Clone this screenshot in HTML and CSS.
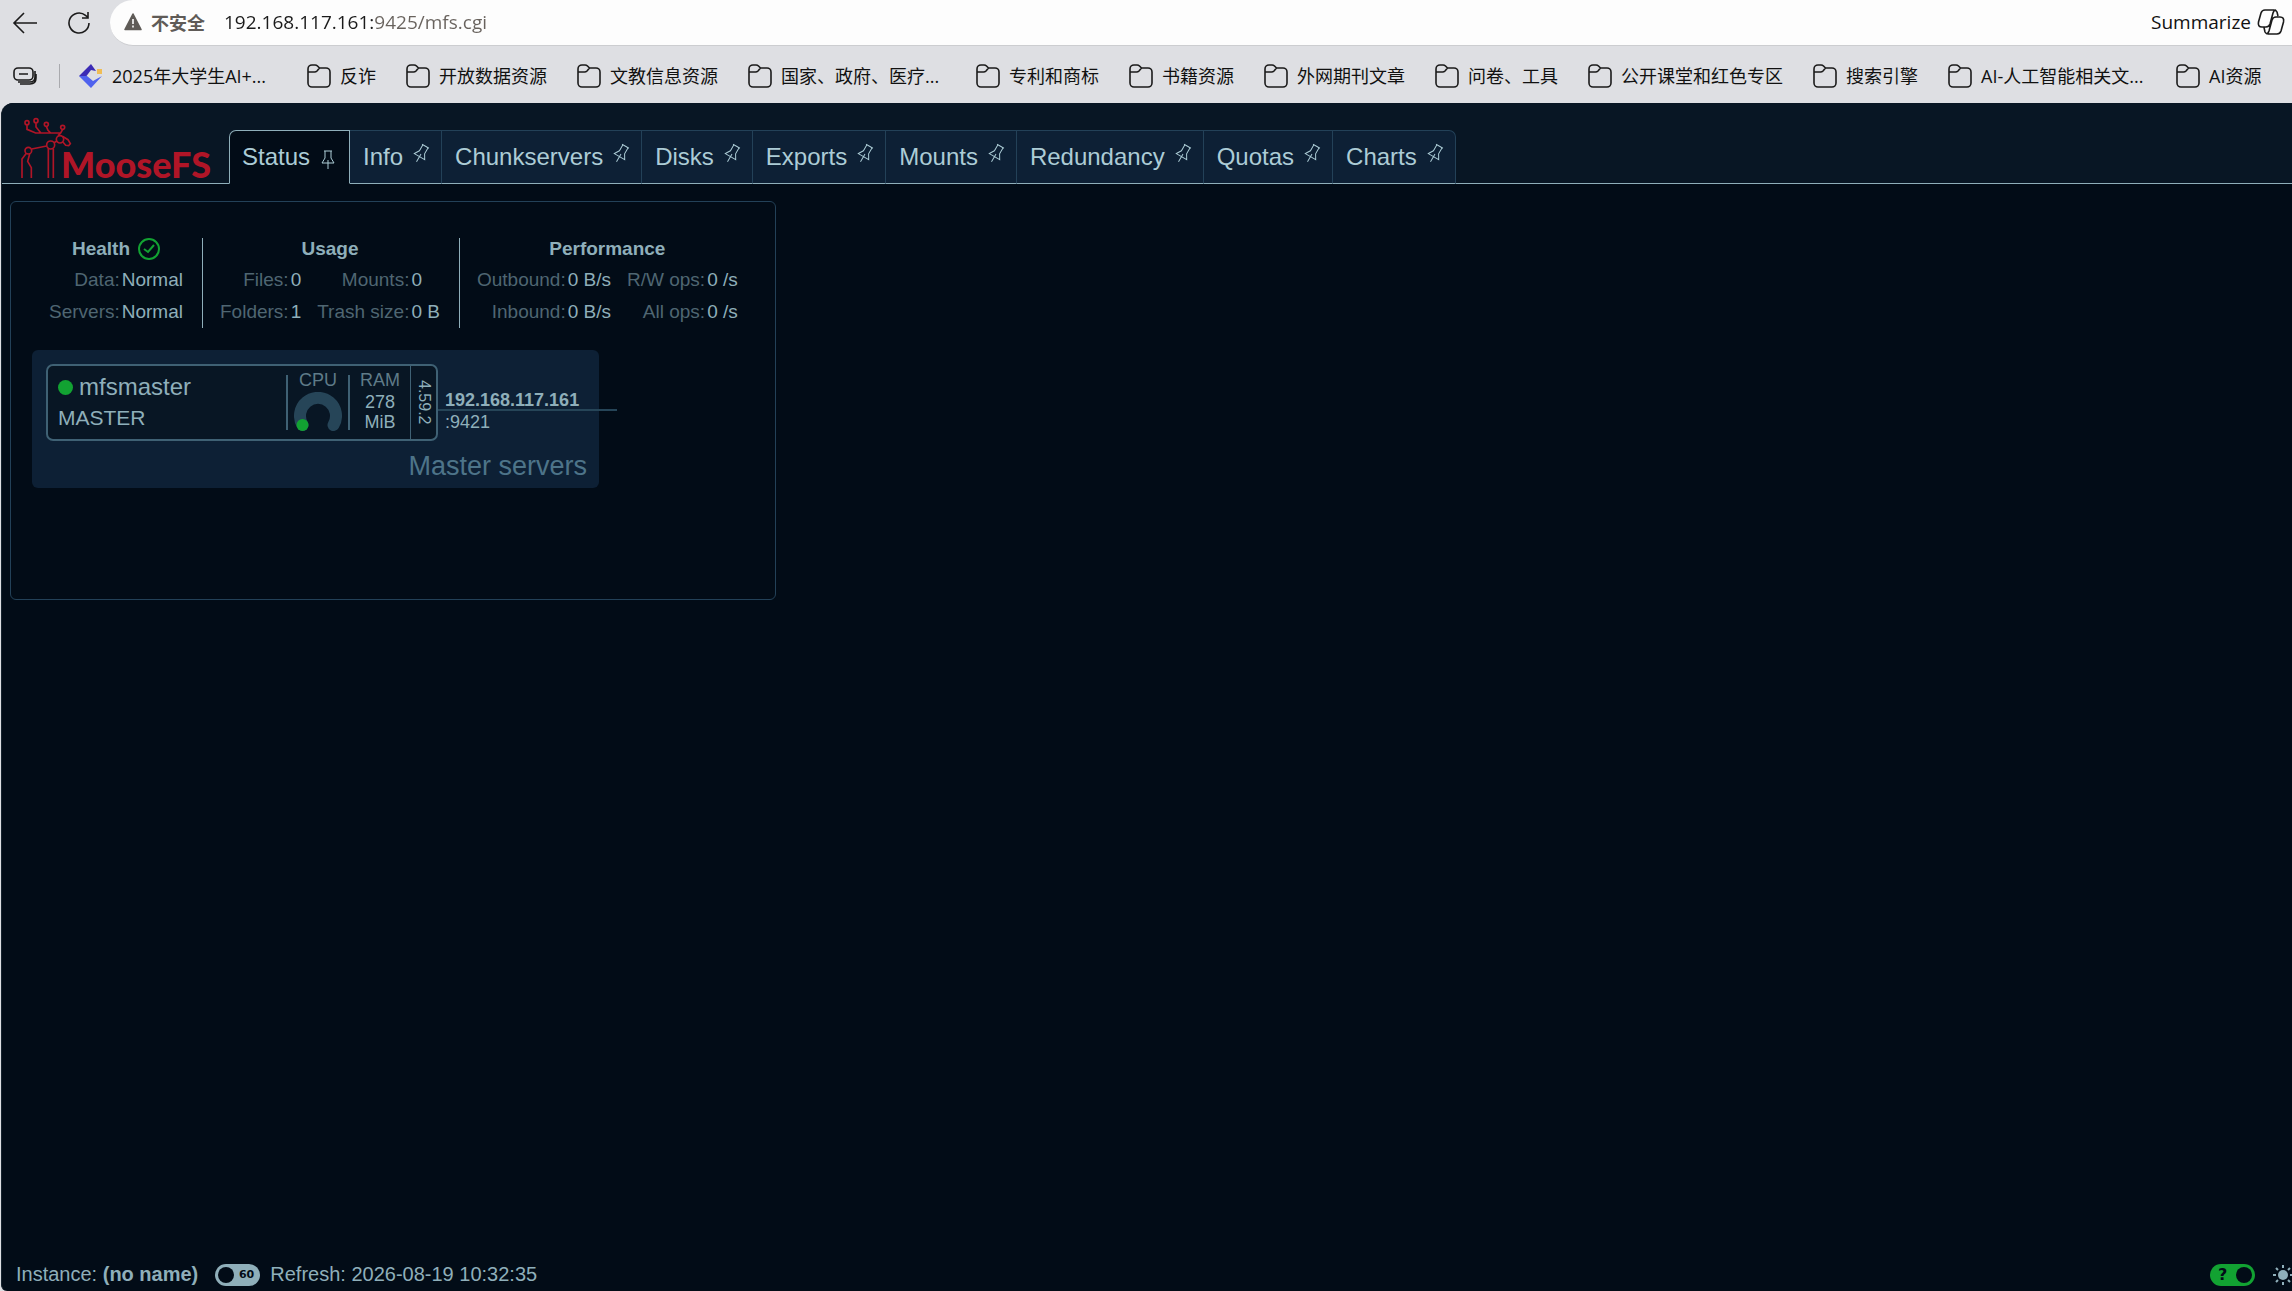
FILE: index.html
```html
<!DOCTYPE html>
<html lang="zh-CN">
<head>
  <meta charset="UTF-8">
  <meta name="viewport" content="width=device-width, initial-scale=1.0">
  <title>MooseFS</title>
  <link rel="stylesheet" href="styles.css">
</head>
<body>
  <!-- Shared icons -->
  <svg class="sprite" aria-hidden="true">
    <symbol id="folder" viewBox="0 0 24 24">
      <path d="M1 5a4 4 0 0 1 4-4h3q1.500 0 2.500 1l2 2H19a4 4 0 0 1 4 4v11a4 4 0 0 1-4 4H5a4 4 0 0 1-4-4zM1 8h6.500q1.500 0 2.500-1l2.500-3"/>
    </symbol>
    <symbol id="pin" viewBox="0 0 16 20">
      <path d="M4 1h8M5 1v7L2 13h12l-3-5V1M8 10v9"/>
    </symbol>
  </svg>

  <div class="browser">
    <div class="toolbar">
      <button class="tool-btn" type="button" aria-label="返回">
        <svg width="26" height="24" viewBox="0 0 26 24"><path d="M25 12H2M12 2 2 12l10 10"/></svg>
      </button>
      <button class="tool-btn" type="button" aria-label="刷新">
        <svg width="24" height="24" viewBox="0 0 24 24"><path d="M22 12a10 10 0 1 1-3.500-7.600L20.500 6M21 1v6h-6"/></svg>
      </button>
      <div class="address">
        <svg class="warn" width="18" height="18" viewBox="0 0 18 18"><path class="warn-shape" d="M9 1 17 16.500H1z"/><path class="warn-mark" d="M9 6v5M9 12.500v2"/></svg>
        <label class="insecure" for="url">不安全</label>
        <input class="url" id="url" type="text" value="192.168.117.161:9425/mfs.cgi" autocomplete="off">
        <button class="summarize" type="button">
          Summarize
          <svg width="28" height="26" viewBox="0 0 28 26"><path d="M8 1h9q2 0 3 2l1 4M8 1Q5 1 4 4L1.500 13q-1 5 3.500 5h4q3 0 4-3l3-11q1-3 3-3M20 25h-9q-2 0-3-2l-1-4.500M20 25q3 0 4-3l2.500-9q1-5-3.500-5h-4q-3 0-4 3l-3 11q-1 3-3 3"/></svg>
        </button>
      </div>
    </div>
    <nav class="bookmarks">
      <button class="tool-btn stack" type="button" aria-label="工作区">
        <svg width="24" height="18" viewBox="0 0 24 18"><rect x="1" y="1" width="19" height="12" rx="4"/><path d="M6 7h9M22 4v6q0 5-5 5H5M23 7v4q0 6-6 6H7"/></svg>
      </button>
      <span class="divider"></span>
      <a class="bookmark wide" href="#">
        <svg class="site" width="24" height="24" viewBox="0 0 24 24"><path class="gem-top" d="M12 0 0 12l6 2 6-8 5 1z"/><path class="gem-bottom" d="m0 12 12 12 11-12-9 5-6-5z"/><path class="gem-dot" d="M18 5h5v5h-5z"/></svg>
        <span>2025年大学生AI+...</span>
      </a>
      <a class="bookmark" href="#"><svg class="folder"><use href="#folder"/></svg><span>反诈</span></a>
      <a class="bookmark" href="#"><svg class="folder"><use href="#folder"/></svg><span>开放数据资源</span></a>
      <a class="bookmark" href="#"><svg class="folder"><use href="#folder"/></svg><span>文教信息资源</span></a>
      <a class="bookmark wide" href="#"><svg class="folder"><use href="#folder"/></svg><span>国家、政府、医疗...</span></a>
      <a class="bookmark" href="#"><svg class="folder"><use href="#folder"/></svg><span>专利和商标</span></a>
      <a class="bookmark" href="#"><svg class="folder"><use href="#folder"/></svg><span>书籍资源</span></a>
      <a class="bookmark" href="#"><svg class="folder"><use href="#folder"/></svg><span>外网期刊文章</span></a>
      <a class="bookmark" href="#"><svg class="folder"><use href="#folder"/></svg><span>问卷、工具</span></a>
      <a class="bookmark" href="#"><svg class="folder"><use href="#folder"/></svg><span>公开课堂和红色专区</span></a>
      <a class="bookmark" href="#"><svg class="folder"><use href="#folder"/></svg><span>搜索引擎</span></a>
      <a class="bookmark wide" href="#"><svg class="folder"><use href="#folder"/></svg><span>AI-人工智能相关文...</span></a>
      <a class="bookmark" href="#"><svg class="folder"><use href="#folder"/></svg><span>AI资源</span></a>
    </nav>
  </div>

  <div class="page">
    <header class="header">
      <a class="logo" href="#">
        <svg width="52" height="62" viewBox="60 36 156 186">
          <g>
            <circle cx="81" cy="53" r="6"/><circle cx="108" cy="47" r="6"/><circle cx="139" cy="58" r="6"/><circle cx="188" cy="67" r="6"/>
            <path d="M81 59v14l26 11h73M108 53v13l14 17M139 64l5 12 8 8M188 73l-6 11-8 8"/>
            <circle cx="180" cy="103" r="11"/>
            <path d="m187 94 17 10 7 12-5 6-9-1-9-11"/>
            <circle cx="152" cy="120" r="12"/>
            <path d="m162 113 9-5M95 132l45-9"/>
            <circle cx="85" cy="137" r="10"/>
            <path d="m79 145-13 17v57M89 147l-6 22 11 19v31M145 131v88M160 131v88"/>
          </g>
        </svg>
        <span>MooseFS</span>
      </a>
      <nav class="tabs">
        <a class="tab active" href="#">Status<svg class="pin"><use href="#pin"/></svg></a>
        <a class="tab" href="#">Info<svg class="pin"><use href="#pin"/></svg></a>
        <a class="tab" href="#">Chunkservers<svg class="pin"><use href="#pin"/></svg></a>
        <a class="tab" href="#">Disks<svg class="pin"><use href="#pin"/></svg></a>
        <a class="tab" href="#">Exports<svg class="pin"><use href="#pin"/></svg></a>
        <a class="tab" href="#">Mounts<svg class="pin"><use href="#pin"/></svg></a>
        <a class="tab" href="#">Redundancy<svg class="pin"><use href="#pin"/></svg></a>
        <a class="tab" href="#">Quotas<svg class="pin"><use href="#pin"/></svg></a>
        <a class="tab" href="#">Charts<svg class="pin"><use href="#pin"/></svg></a>
      </nav>
    </header>

    <main class="content">
      <section class="panel">
        <div class="stats">
          <table>
            <tr>
              <th colspan="2">
                <span class="health">Health
                  <svg width="22" height="22" viewBox="0 0 22 22"><circle cx="11" cy="11" r="10"/><path d="m6 11 4 3 6-7"/></svg>
                </span>
              </th>
            </tr>
            <tr><td class="name">Data:</td><td>Normal</td></tr>
            <tr><td class="name">Servers:</td><td>Normal</td></tr>
          </table>
          <table>
            <tr><th colspan="4">Usage</th></tr>
            <tr><td class="name">Files:</td><td>0</td><td class="name next">Mounts:</td><td>0</td></tr>
            <tr><td class="name">Folders:</td><td>1</td><td class="name next">Trash size:</td><td>0 B</td></tr>
          </table>
          <table>
            <tr><th colspan="4">Performance</th></tr>
            <tr><td class="name">Outbound:</td><td>0 B/s</td><td class="name next">R/W ops:</td><td>0 /s</td></tr>
            <tr><td class="name">Inbound:</td><td>0 B/s</td><td class="name next">All ops:</td><td>0 /s</td></tr>
          </table>
        </div>

        <div class="masters">
          <div class="master-row">
            <div class="server">
              <div class="server-name">
                <div class="host"><span class="dot"></span>mfsmaster</div>
                <div class="role">MASTER</div>
              </div>
              <div class="meter">
                <span class="meter-title">CPU</span>
                <svg width="48" height="40" viewBox="0 0 48 40"><path class="gauge" d="M8.500 33a18 18 0 1 1 31 0"/><circle class="gauge-dot" cx="8.500" cy="33" r="6"/></svg>
              </div>
              <div class="meter">
                <span class="meter-title">RAM</span>
                <span class="meter-value">278</span>
                <span class="meter-value">MiB</span>
              </div>
              <div class="version">4.59.2</div>
            </div>
            <div class="endpoint">
              <strong>192.168.117.161</strong>
              <span>:9421</span>
            </div>
          </div>
          <h2>Master servers</h2>
        </div>
      </section>
    </main>

    <footer class="footer">
      <span>Instance: <b>(no name)</b></span>
      <span class="switch refresh">
        <input type="checkbox" id="auto-refresh">
        <span class="switch-text">60</span>
      </span>
      <label for="auto-refresh">Refresh: 2026-08-19 10:32:35</label>
      <label class="switch help">
        <input type="checkbox" aria-label="Help" checked>
        <span class="switch-text">?</span>
      </label>
      <button class="theme" type="button" aria-label="Theme">
        <svg width="22" height="22" viewBox="0 0 22 22"><circle cx="11" cy="11" r="5"/><path d="M11 1v3M11 18v3M1 11h3M18 11h3M4 4l2 2M16 16l2 2M4 18l2-2M16 6l2-2"/></svg>
      </button>
    </footer>
  </div>
</body>
</html>
```
FILE: styles.css
```css
* {
  margin: 0;
  padding: 0;
  box-sizing: border-box;
}
body {
  display: flex;
  flex-direction: column;
  min-height: 100vh;
  overflow-x: hidden;
  background: #dedfe3;
  font-family: "Liberation Sans", Arial, sans-serif;
}
svg {
  fill: none;
  flex-shrink: 0;
}
button {
  border: none;
  background: none;
  font: inherit;
  color: inherit;
  cursor: pointer;
}
a {
  color: inherit;
  text-decoration: none;
}
.sprite {
  display: none;
}

/* Browser bars */
.browser {
  font-family: "Open Sans", "Noto Sans CJK SC", sans-serif;
  color: #111;
}
.browser svg {
  stroke: #1b1b1b;
  stroke-width: 1.6;
}
.toolbar {
  display: flex;
  align-items: center;
  gap: 29px;
  height: 45px;
  padding-left: 12px;
}
.tool-btn {
  display: flex;
}
.address {
  flex: 1;
  display: flex;
  align-items: center;
  height: 46px;
  margin-left: -10px;
  padding: 0 7px 0 14px;
  background: #fdfdfd;
  border-bottom: 1px solid #cccdd0;
  border-radius: 23px 0 0 23px;
}
.address .warn-shape {
  fill: #5f5b57;
  stroke: #5f5b57;
  stroke-linejoin: round;
}
.address .warn-mark {
  stroke: #fdfdfd;
}
.insecure {
  margin-left: 9px;
  font-size: 18px;
  font-weight: 700;
  color: #5f5b57;
}
.url {
  flex: 1;
  min-width: 0;
  margin-left: 19px;
  border: none;
  outline: none;
  font-family: inherit;
  font-size: 19px;
  color: transparent;
  background: linear-gradient(90deg, #1b1b1b 149px, #68625d 149px);
  background-clip: text;
}
.summarize {
  display: flex;
  align-items: center;
  gap: 6px;
  font-size: 19px;
}
.bookmarks {
  display: flex;
  align-items: center;
  gap: 30px;
  height: 58px;
  padding: 3px 0 0 13px;
  overflow: hidden;
  white-space: nowrap;
}
.divider {
  width: 1px;
  height: 24px;
  margin: 0 -11px 0 -8px;
  background: #a9aaae;
}
.bookmark {
  display: flex;
  align-items: center;
  gap: 9px;
  font-size: 18px;
  line-height: 24px;
}
.bookmark.wide span {
  width: 165px;
}
.folder {
  width: 24px;
  height: 24px;
}
.browser .site {
  stroke: none;
}
.gem-top {
  fill: #3b2bb5;
}
.gem-bottom {
  fill: #4f62ee;
}
.gem-dot {
  fill: #f0bd55;
}

/* MooseFS page */
.page {
  flex: 1;
  display: flex;
  flex-direction: column;
  margin-left: 1px;
  background: #020c17;
  border-left: 1px solid #16232e;
  border-radius: 12px 0 0 6px;
  color: #8fafba;
  overflow: hidden;
}
.header {
  display: flex;
  align-items: flex-end;
  height: 81px;
  background: #081624;
  border-bottom: 1px solid #8fafba;
}
.logo {
  display: flex;
  align-items: flex-end;
  width: 227px;
  padding: 0 0 4px 18px;
  color: #b01527;
}
.logo svg {
  stroke: #b01527;
  stroke-width: 5;
}
.logo span {
  margin-left: -11px;
  font-family: Lato, sans-serif;
  font-size: 36px;
  font-weight: 900;
  line-height: 30px;
}
.tabs {
  display: flex;
  margin-bottom: -1px;
}
.tab {
  display: flex;
  align-items: center;
  gap: 10px;
  height: 54px;
  padding: 0 12px 0 13px;
  background: #0d2035;
  border: 1px solid #234158;
  border-width: 1px 1px 1px 0;
  border-bottom-color: #8fafba;
  font-size: 24px;
  color: #acccd6;
}
.tab:last-child {
  border-top-right-radius: 7px;
}
.tab.active {
  padding: 0 13px 0 12px;
  background: #020c17;
  border: 1px solid #8fafba;
  border-bottom-color: #020c17;
  border-top-left-radius: 7px;
}
.pin {
  width: 16px;
  height: 20px;
  margin-bottom: 6px;
  stroke: #acccd6;
  transform: rotate(30deg);
}
.active .pin {
  margin: 6px 0 0;
  transform: none;
}
.content {
  flex: 1;
  padding: 17px 8px;
}
.panel {
  width: 766px;
  max-width: 100%;
  min-height: 399px;
  padding: 36px 21px;
  border: 1px solid #234158;
  border-radius: 6px;
}
.stats {
  display: flex;
  align-items: flex-start;
}
.stats table {
  padding: 0 19px 0 17px;
  border-spacing: 0;
  font-size: 19px;
  line-height: 32px;
  white-space: nowrap;
}
.stats table + table {
  border-left: 1px solid #8fafba;
}
.stats th {
  height: 26px;
  line-height: 22px;
  vertical-align: top;
}
.stats td {
  padding-left: 2px;
}
.stats .name {
  padding-left: 0;
  text-align: right;
  color: #4f6672;
}
.stats .next {
  padding-left: 16px;
}
.health {
  display: inline-flex;
  align-items: center;
  gap: 8px;
}
.health svg {
  stroke: #12a232;
  stroke-width: 2;
}

/* Master servers */
.masters {
  width: 567px;
  height: 138px;
  margin-top: 22px;
  padding: 14px 12px 14px 14px;
  background: #0d2035;
  border-radius: 6px;
}
.master-row {
  position: relative;
  display: flex;
}
.master-row::after {
  content: "";
  position: absolute;
  left: 392px;
  top: 45px;
  width: 179px;
  height: 2px;
  background: #264558;
}
.server {
  display: flex;
  width: 392px;
  height: 77px;
  background: #081624;
  border: 2px solid #3f6174;
  border-radius: 7px;
}
.server-name {
  flex: 1;
  padding: 6px 10px;
}
.host {
  display: flex;
  align-items: center;
  gap: 6px;
  font-size: 24px;
  line-height: 30px;
}
.dot {
  width: 15px;
  height: 15px;
  border-radius: 50%;
  background: #12a232;
}
.role {
  font-size: 21px;
  line-height: 31px;
}
.meter {
  position: relative;
  display: flex;
  flex-direction: column;
  align-items: center;
  width: 62px;
  padding: 3px 0 0 2px;
  font-size: 18px;
}
.meter::before {
  content: "";
  position: absolute;
  left: 0;
  top: 9px;
  width: 2px;
  height: 55px;
  background: #3f6174;
}
.meter-title {
  color: #5f7b88;
  line-height: 23px;
}
.meter-value {
  line-height: 20px;
}
.gauge {
  stroke: #264558;
  stroke-width: 12;
  stroke-linecap: round;
}
.gauge-dot {
  fill: #12a232;
}
.version {
  width: 26px;
  border-left: 1px solid #3f6174;
  font-size: 16px;
  line-height: 24px;
  text-align: center;
  writing-mode: vertical-rl;
}
.endpoint {
  position: relative;
  z-index: 1;
  display: flex;
  flex-direction: column;
  padding: 25px 0 0 7px;
  font-size: 18px;
  line-height: 22px;
}
.masters h2 {
  padding-top: 7px;
  font-size: 27px;
  font-weight: 400;
  line-height: 36px;
  text-align: right;
  color: #4d7489;
}

/* Footer */
.footer {
  display: flex;
  align-items: center;
  height: 33px;
  padding-left: 14px;
  font-size: 20px;
}
.switch {
  display: flex;
  align-items: center;
  justify-content: space-between;
  width: 45px;
  height: 22px;
  padding: 0 6px 0 3px;
  background: #8fafba;
  border-radius: 11px;
  color: #020c17;
  font-weight: 700;
}
.switch input {
  appearance: none;
  width: 16px;
  height: 16px;
  border-radius: 50%;
  background: #020c17;
}
.refresh {
  margin: 0 10px 0 17px;
}
.refresh .switch-text {
  font-family: "DejaVu Sans", sans-serif;
  font-size: 11px;
}
.help {
  flex-direction: row-reverse;
  margin-left: auto;
  padding: 0 3px 0 8px;
  background: #12a232;
}
.help .switch-text {
  font-family: "DejaVu Sans", sans-serif;
  font-size: 16px;
}
.theme {
  display: flex;
  margin: 0 -2px 0 17px;
}
.theme svg {
  stroke: #8fafba;
  stroke-width: 2;
}
.theme circle {
  fill: #8fafba;
  stroke: none;
}
```
